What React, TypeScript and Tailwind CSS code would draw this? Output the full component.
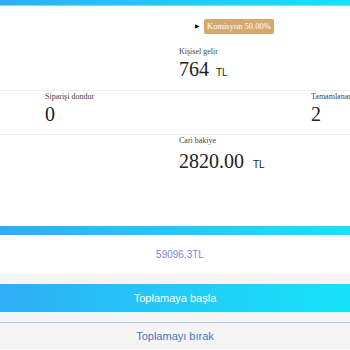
const serif = { fontFamily: '"Liberation Serif", "Times New Roman", serif' };

function Stat({ label, value, unit }: { label: string; value: string; unit?: string }) {
  return (
    <div className="whitespace-nowrap">
      <p className="text-[8px] leading-[10px] text-[#444]">{label}</p>
      <p className="flex items-baseline text-[20px] leading-[24px] text-[#222]">
        {value}
        {unit && <span className="ml-[7px] font-['Liberation_Sans',Arial,sans-serif] text-[10px] text-[#222]">{unit}</span>}
      </p>
    </div>
  );
}

export default function App() {
  return (
    <div className="h-[350px] w-[350px] overflow-hidden bg-white" style={serif}>
      <div className="h-[6px] bg-gradient-to-r from-[#2eaef7] to-[#14e3f8] border-b border-[#7fdcfb]" />

      <div className="h-[85px] border-b border-[#eeeeee] pl-[179px] pt-[13px]">
        <div className="flex h-[15px] items-center pl-[16px]">
          <span className="text-[6px] text-black">▶</span>
          <span className="ml-[4px] rounded-[2px] bg-[#d6a86c] px-[3px] text-[8.5px] leading-[15px] text-white">Komisyon 50.00%</span>
        </div>
        <div className="mt-[13px]">
          <Stat label="Kişisel gelir" value="764" unit="TL" />
        </div>
      </div>

      <div className="grid h-[44px] grid-cols-[134px_132px_200px] border-b border-[#eeeeee] pl-[45px] pt-[1px]">
        <Stat label="Siparişi dondur" value="0" />
        <div />
        <Stat label="Tamamlanan sipariş" value="2" />
      </div>

      <div className="h-[91px] pl-[179px] pt-[1px]">
        <p className="text-[8px] leading-[10px] text-[#444]">Cari bakiye</p>
        <p className="mt-[3px] flex items-baseline text-[20px] leading-[24px] text-[#222]">
          2820.00
          <span className="ml-[9px] font-['Liberation_Sans',Arial,sans-serif] text-[10px]">TL</span>
        </p>
      </div>

      <div className="h-[9px] bg-gradient-to-r from-[#2eaef7] to-[#14e3f8]" />

      <div className="flex h-[39px] items-center justify-center pl-[10px] font-['Liberation_Sans',Arial,sans-serif] text-[10px] text-[#8a7be6]">
        59096.3TL
      </div>

      <div className="h-[75px] bg-[#f5f5f5] pt-[10px] font-['Liberation_Sans',Arial,sans-serif]">
        <button className="flex h-[28px] w-full items-center justify-center bg-gradient-to-r from-[#2eaef7] to-[#14e3f8] text-[11px] text-white">
          Toplamaya başla
        </button>
        <button className="mt-[10px] flex h-[28px] w-full items-center justify-center border-t border-[#b4c8ea] text-[11px] text-[#3d78d0]">
          Toplamayı bırak
        </button>
      </div>
    </div>
  );
}
